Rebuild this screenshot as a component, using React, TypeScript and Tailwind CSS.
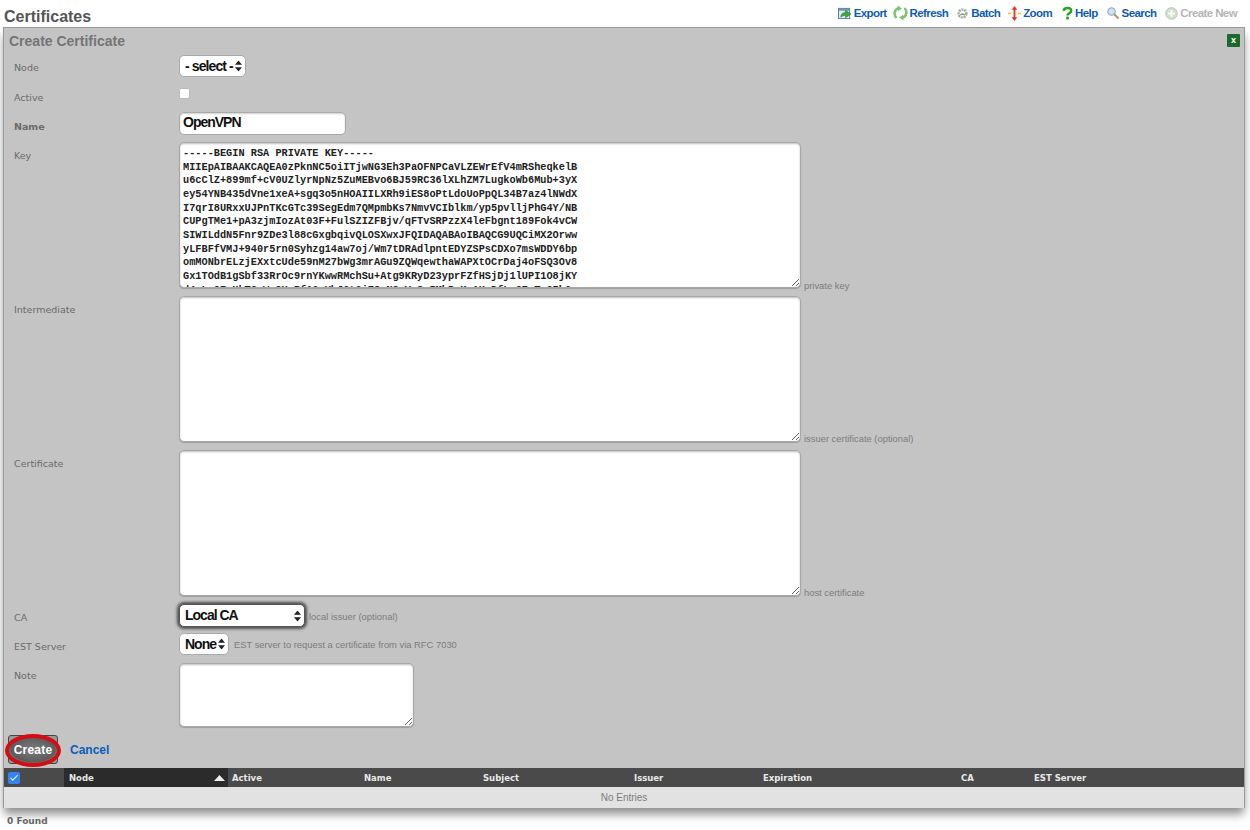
import { Check } from "lucide-react";

const keyText = `-----BEGIN RSA PRIVATE KEY-----
MIIEpAIBAAKCAQEA0zPknNC5oiITjwNG3Eh3PaOFNPCaVLZEWrEfV4mRSheqkelB
u6cClZ+899mf+cV0UZlyrNpNz5ZuMEBvo6BJ59RC36lXLhZM7LugkoWb6Mub+3yX
ey54YNB435dVne1xeA+sgq3o5nHOAIILXRh9iES8oPtLdoUoPpQL34B7az4lNWdX
I7qrI8URxxUJPnTKcGTc39SegEdm7QMpmbKs7NmvVCIblkm/yp5pvlljPhG4Y/NB
CUPgTMe1+pA3zjmIozAt03F+FulSZIZFBjv/qFTvSRPzzX4leFbgnt189Fok4vCW
SIWILddN5Fnr9ZDe3l88cGxgbqivQLOSXwxJFQIDAQABAoIBAQCG9UQCiMX2Orww
yLFBFfVMJ+940r5rn0Syhzg14aw7oj/Wm7tDRAdlpntEDYZSPsCDXo7msWDDY6bp
omMONbrELzjEXxtcUde59nM27bWg3mrAGu9ZQWqewthaWAPXtOCrDaj4oFSQ3Ov8
Gx1TOdB1gSbf33RrOc9rnYKwwRMchSu+Atg9KRyD23yprFZfHSjDj1lUPI1O8jKY
d4sLmQ7vHkT2pWn9XcRfA6uYbJ0tGiE3oN8qVzSx5MhPwKy1UaDfLgC7rTe2Ib0v`;

const links = [
  { label: "Export", icon: <ExportIcon />, mr: "mr-[6px]" },
  { label: "Refresh", icon: <RefreshIcon />, mr: "mr-[8px]" },
  { label: "Batch", icon: <BatchIcon />, mr: "mr-[8px]" },
  { label: "Zoom", icon: <ZoomIcon />, mr: "mr-[10px]" },
  { label: "Help", icon: <HelpIcon />, mr: "mr-[9px]" },
  { label: "Search", icon: <SearchIcon />, mr: "mr-[9px]" },
];

const columns = [
  { label: "Active", width: "w-[132px]" },
  { label: "Name", width: "w-[119px]" },
  { label: "Subject", width: "w-[151px]" },
  { label: "Issuer", width: "w-[129px]" },
  { label: "Expiration", width: "w-[198px]" },
  { label: "CA", width: "w-[73px]" },
  { label: "EST Server", width: "flex-1" },
];

function ExportIcon() {
  return (
    <svg width="14" height="13" viewBox="0 0 15 14">
      <rect x="0.5" y="1.5" width="12" height="11" fill="#dfe8ef" stroke="#4f7d9c" />
      <rect x="1" y="2" width="11" height="2" fill="#6f98b5" />
      <path d="M3 11c0-3 2-5 5-5V3.500L14 7.500l-6 4V9c-2 0-3.500 .5-5 2z" fill="#3fa83a" stroke="#1f7a22" strokeWidth="0.6" />
    </svg>
  );
}

function RefreshIcon() {
  return (
    <svg width="15" height="16" viewBox="0 0 15 16" fill="none">
      <path d="M3.500 13C.5 10 1 4.500 5.500 3.200" stroke="#7cc468" strokeWidth="2.400" />
      <path d="M4.500 .5l4.500 3-4 2.800z" fill="#7cc468" />
      <path d="M11.500 3C14.500 6 14 11.500 9.500 12.800" stroke="#7cc468" strokeWidth="2.400" />
      <path d="M10.500 15.500L6 12.500l4-2.800z" fill="#7cc468" />
    </svg>
  );
}

function BatchIcon() {
  return (
    <svg width="13" height="13" viewBox="0 0 14 13">
      <circle cx="7" cy="6.500" r="4.200" fill="none" stroke="#a3a89e" strokeWidth="2.600" strokeDasharray="2.200 0.800" />
      <path d="M4 8a3.500 3.500 0 0 1 6 0z" fill="#7b9c6f" />
    </svg>
  );
}

function ZoomIcon() {
  return (
    <svg width="13" height="15" viewBox="0 0 14 16">
      <path d="M0 8h14" stroke="#f2c230" strokeWidth="1.600" strokeDasharray="3.500 7 3.500" />
      <path d="M7 0l3 4H8v8h2l-3 4-3-4h2V4H4z" fill="#e2332a" />
    </svg>
  );
}

function HelpIcon() {
  return (
    <svg width="11" height="14" viewBox="0 0 12 14" fill="none">
      <path d="M1.800 4.600C2 2.600 3.800 1.500 6 1.500c2.400 0 4 1.300 4 3 0 2.800-4 2.800-4 5.300" stroke="#22a81e" strokeWidth="2.800" />
      <rect x="4.500" y="11" width="3" height="3" fill="#22a81e" />
    </svg>
  );
}

function SearchIcon() {
  return (
    <svg width="13" height="12" viewBox="0 0 13 12">
      <circle cx="4.500" cy="4.500" r="3.700" fill="#cfe3f5" stroke="#8fb1d3" strokeWidth="1.200" />
      <path d="M7.500 7.500L11 11" stroke="#b89a6a" strokeWidth="2.200" strokeLinecap="round" />
    </svg>
  );
}

function CreateIcon() {
  return (
    <svg width="13" height="13" viewBox="0 0 13 13">
      <circle cx="6.500" cy="6.500" r="5.800" fill="#cfe0cb" stroke="#b9c9b6" />
      <path d="M6.500 3.200v6.600M3.200 6.500h6.600" stroke="#fff" strokeWidth="2" />
    </svg>
  );
}

function SelectArrows() {
  return (
    <svg width="7" height="11" viewBox="0 0 7 11" className="absolute right-[3px] top-1/2 -translate-y-1/2 pointer-events-none">
      <path d="M3.500 0L7 4.300H0zM3.500 11L0 6.700h7z" fill="#222" />
    </svg>
  );
}

function Label({ text, bold, pt = "pt-[8px]" }: { text: string; bold?: boolean; pt?: string }) {
  return (
    <div className={`${pt} pl-[10px] text-[9.5px] leading-[14px] font-['DejaVu_Sans'] text-[#6b6b6b] ${bold ? "font-bold" : ""}`}>
      {text}
    </div>
  );
}

function Hint({ text, className }: { text: string; className?: string }) {
  return <span className={`text-[9.4px] leading-3 text-[#7c7c7c] ${className ?? ""}`}>{text}</span>;
}

function Area({ value, className }: { value?: string; className?: string }) {
  return (
    <textarea
      readOnly
      value={value ?? ""}
      spellCheck={false}
      className={`block overflow-hidden bg-white rounded-[5px] border border-[#a8a8a8] shadow-[inset_0_1px_2px_rgba(0,0,0,0.25),0_1px_1px_rgba(0,0,0,0.2)] outline-none ${className ?? ""}`}
    />
  );
}

function BigRow({ label, hint }: { label: string; hint: string }) {
  return (
    <div className="grid grid-cols-[175px_1fr] h-[154px]">
      <Label text={label} />
      <div className="flex items-end h-[146px] mt-px gap-[3px]">
        <Area className="w-[622px] h-[146px]" />
        <Hint text={hint} className="mb-[-3px]" />
      </div>
    </div>
  );
}

export default function App() {
  return (
    <div className="w-[1250px] h-[830px] overflow-hidden bg-white font-['Liberation_Sans',sans-serif]">
      <div className="h-[27px] flex justify-between pl-1 pr-[13px]">
        <h1 className="pt-[8px] text-[16px] leading-[18px] font-bold text-[#555]">Certificates</h1>
        <div className="flex items-start pt-[5px] text-[11.5px] leading-4 font-bold tracking-[-0.6px] text-[#0c5db8]">
          {links.map((l) => (
            <a key={l.label} className={`flex items-center h-4 gap-[2px] ${l.mr}`}>
              {l.icon}
              {l.label}
            </a>
          ))}
          <a className="flex items-center h-4 gap-[2px] text-[#b5b5b5]">
            <CreateIcon />
            Create New
          </a>
        </div>
      </div>

      <div className="ml-[3px] w-[1242px] h-[781px] bg-[#c4c4c4] border border-[#9a9a9a] border-b-0 shadow-[0_7px_9px_-1px_rgba(0,0,0,0.45)]">
        <div className="relative h-[26px] pl-[5px] pt-[5px] text-[14px] leading-4 font-bold text-[#757575]">
          Create Certificate
          <span className="absolute right-[4px] top-[6px] w-[13px] h-[13px] flex items-center justify-center bg-[#1c6a2a] rounded-[1px] text-white text-[9px] leading-none font-bold">
            x
          </span>
        </div>

        <div className="grid grid-cols-[175px_1fr] h-[29px]">
          <Label text="Node" pt="pt-[7px]" />
          <div className="relative w-[67px] h-[22px] mt-px bg-white rounded-[5px] border border-[#aaa]">
            <select className="block w-full h-[18px] appearance-none bg-transparent pl-[5px] text-[14px] font-bold tracking-[-0.9px] text-[#111] outline-none">
              <option>- select -</option>
            </select>
            <SelectArrows />
          </div>
        </div>

        <div className="grid grid-cols-[175px_1fr] h-[29px]">
          <Label text="Active" />
          <input type="checkbox" className="appearance-none block w-[11px] h-[11px] mt-[5px] bg-white rounded-[2px] border border-[#bbb]" />
        </div>

        <div className="grid grid-cols-[175px_1fr] h-[29px]">
          <Label text="Name" bold />
          <input
            readOnly
            value="OpenVPN"
            className="w-[167px] h-[23px] bg-white rounded-[5px] border border-[#aaa] shadow-[inset_0_1px_2px_rgba(0,0,0,0.2)] pl-[3px] pb-[3px] text-[14px] font-bold tracking-[-1px] text-[#111] outline-none"
          />
        </div>

        <div className="grid grid-cols-[175px_1fr] h-[154px]">
          <Label text="Key" />
          <div className="flex items-end h-[146px] mt-px gap-[3px]">
            <Area
              value={keyText}
              className="w-[622px] h-[146px] whitespace-pre pl-[3px] pt-[4px] font-['Liberation_Mono',monospace] font-bold text-[10.28px] leading-[13.67px] text-[#222]"
            />
            <Hint text="private key" className="mb-[-4px]" />
          </div>
        </div>

        <BigRow label="Intermediate" hint="issuer certificate (optional)" />
        <BigRow label="Certificate" hint="host certificate" />

        <div className="grid grid-cols-[175px_1fr] h-[29px]">
          <Label text="CA" />
          <div className="flex items-center h-[23px] mt-px gap-[4px]">
            <div className="relative w-[126px] h-[23px] bg-white rounded-[5px] border border-[#555] shadow-[0_0_3px_2px_rgba(0,0,0,0.6)]">
              <select className="block w-full h-[20px] appearance-none bg-transparent pl-[5px] text-[14px] font-bold tracking-[-1px] text-[#111] outline-none">
                <option>Local CA</option>
              </select>
              <SelectArrows />
            </div>
            <Hint text="local issuer (optional)" className="mt-[2px]" />
          </div>
        </div>

        <div className="grid grid-cols-[175px_1fr] h-[29px]">
          <Label text="EST Server" />
          <div className="flex items-center h-[22px] mt-px gap-[5px]">
            <div className="relative w-[50px] h-[22px] bg-white rounded-[5px] border border-[#aaa]">
              <select className="block w-full h-[19px] appearance-none bg-transparent pl-[5px] text-[14px] font-bold tracking-[-1px] text-[#111] outline-none">
                <option>None</option>
              </select>
              <SelectArrows />
            </div>
            <Hint text="EST server to request a certificate from via RFC 7030" className="mt-[2px]" />
          </div>
        </div>

        <div className="grid grid-cols-[175px_1fr] h-[74px]">
          <Label text="Note" />
          <Area className="w-[235px] h-[64px] mt-[2px]" />
        </div>

        <div className="flex items-start h-[33px] pl-[4px]">
          <div className="relative">
            <button className="block w-[50px] h-[29px] rounded-[3px] border border-[#444] bg-[radial-gradient(ellipse_at_center,#7d7d7d,#5c5c5c_65%,#9a9a9a_80%)] text-white text-[12px] font-bold tracking-[0.2px]">
              Create
            </button>
            <span className="absolute -left-[3px] -top-[1px] w-[56px] h-[33px] rounded-[50%] border-[4px] border-[#d40d12] pointer-events-none" />
          </div>
          <a className="ml-[12px] pt-[7px] text-[12px] leading-4 font-bold text-[#0c5db8]">Cancel</a>
        </div>

        <div className="flex h-[19px] bg-[#4a4a4a] text-[8.5px] leading-[20px] font-bold font-['DejaVu_Sans'] text-[#e8e8e8]">
          <div className="w-[60px] flex items-center pl-[4px]">
            <span className="w-[12px] h-[12px] flex items-center justify-center rounded-[2px] bg-[#3384f0]">
              <Check size={10} strokeWidth={2.5} color="#fff" />
            </span>
          </div>
          <div className="relative w-[164px] bg-[#2b2b2b] pl-[5px]">
            Node
            <svg width="11" height="6" viewBox="0 0 11 6" className="absolute right-[3px] top-[7px]">
              <path d="M5.500 0L11 6H0z" fill="#eee" />
            </svg>
          </div>
          {columns.map((c) => (
            <div key={c.label} className={`${c.width} pl-[4px]`}>
              {c.label}
            </div>
          ))}
        </div>
        <div className="h-[21px] bg-[#e2e2e2] text-center text-[10px] leading-[21px] text-[#7c7c7c]">No Entries</div>
      </div>

      <div className="pl-[7px] pt-[7px] text-[9px] leading-3 font-bold font-['DejaVu_Sans'] text-[#666]">0 Found</div>
    </div>
  );
}
